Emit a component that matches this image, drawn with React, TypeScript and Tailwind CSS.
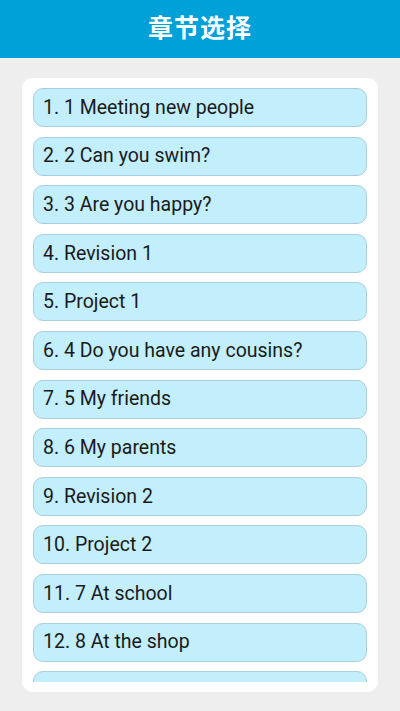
const chapters = [
  "1. 1 Meeting new people",
  "2. 2 Can you swim?",
  "3. 3 Are you happy?",
  "4. Revision 1",
  "5. Project 1",
  "6. 4 Do you have any cousins?",
  "7. 5 My friends",
  "8. 6 My parents",
  "9. Revision 2",
  "10. Project 2",
  "11. 7 At school",
  "12. 8 At the shop",
  "",
];

export default function App() {
  return (
    <div
      className="flex h-[711px] w-[400px] flex-col overflow-hidden bg-[#eeeeee]"
      style={{ fontFamily: "Roboto, 'Noto Sans CJK SC', sans-serif" }}
    >
      <header className="flex h-[58px] shrink-0 items-center justify-center bg-[#00a1d9]">
        <h1 className="text-[25px] font-bold tracking-[1px] text-white">章节选择</h1>
      </header>

      <div className="mx-[22px] mb-[19px] mt-[20px] flex min-h-0 flex-1 flex-col rounded-[11px] bg-white px-[11px] py-[10px]">
        <div className="flex min-h-0 flex-1 flex-col gap-[9.6px] overflow-hidden">
          {chapters.map((title, i) => (
            <button
              key={i}
              type="button"
              className="flex h-[39px] shrink-0 items-center rounded-[10px] border border-[#a8cfdc] bg-[#c3eefc] px-[9px] text-left text-[19.5px] text-[#1a1a1a]"
            >
              {title}
            </button>
          ))}
        </div>
      </div>
    </div>
  );
}
